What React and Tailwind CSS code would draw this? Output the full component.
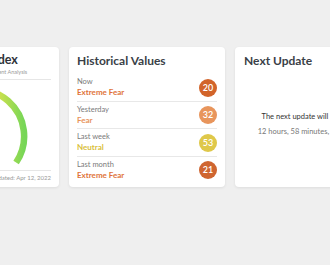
import React from 'react';

const rows = [
  { label: 'Now', status: 'Extreme Fear', value: 20, text: 'text-[#e0733a]', dot: 'bg-[#d2642a]' },
  { label: 'Yesterday', status: 'Fear', value: 32, text: 'text-[#e8935a]', dot: 'bg-[#e8955c]' },
  { label: 'Last week', status: 'Neutral', value: 53, text: 'text-[#d9c03c]', dot: 'bg-[#dfc84a]' },
  { label: 'Last month', status: 'Extreme Fear', value: 21, text: 'text-[#e0733a]', dot: 'bg-[#cf6530]' },
];

const Card = ({ children, className = '' }) => (
  <div className={`w-[156px] h-[140px] shrink-0 bg-white rounded-[4px] shadow-[0_1px_3px_rgba(0,0,0,0.08)] flex flex-col ${className}`}>
    {children}
  </div>
);

export default function App() {
  return (
    <div className="min-h-[265px] w-[330px] overflow-hidden bg-[#efefef] font-['Lato','Noto_Sans',sans-serif]">
      <div className="flex gap-[10px] pt-[47px] ml-[-97px]">
        <Card className="px-[8px]">
          <div className="pt-[5px] pb-[3px] border-b border-[#e6e6e6]">
            <div className="text-[12.5px] leading-[16px] font-bold text-[#2f333a]">Fear &amp; Greed Index</div>
            <div className="text-[5.5px] leading-[8px] text-[#9a9a9a]">Multifactorial Crypto Market Sentiment Analysis</div>
          </div>
          <svg width="140" height="96" viewBox="0 0 140 96" className="block">
            <defs>
              <linearGradient id="g" x1="0" y1="0" x2="1" y2="0">
                <stop offset="0" stopColor="#e0552b" />
                <stop offset="0.3" stopColor="#f0a640" />
                <stop offset="0.55" stopColor="#ebe04e" />
                <stop offset="0.75" stopColor="#c6e04e" />
                <stop offset="1" stopColor="#76d657" />
              </linearGradient>
            </defs>
            <path d="M 24.55 87.96 A 50 50 0 1 1 107.45 87.96" fill="none" stroke="url(#g)" strokeWidth="7" />
          </svg>
          <div className="mt-auto border-t border-[#e6e6e6] pt-[2px] pb-[4px] text-right text-[6px] leading-[10px] text-[#999]">
            Last updated: Apr 12, 2022
          </div>
        </Card>

        <Card className="px-[8px]">
          <div className="pt-[6px] pb-[5px] text-[12px] leading-[16px] font-bold text-[#3a3f47]">Historical Values</div>
          <div className="flex flex-col">
            {rows.map((r, i) => (
              <div key={r.label} className={`flex items-center justify-between pt-[3px] pb-[2.5px] ${i < 3 ? 'border-b border-[#e8e8e8]' : ''}`}>
                <div className="flex flex-col">
                  <span className="text-[7.5px] leading-[10px] text-[#7a7a7a]">{r.label}</span>
                  <span className={`text-[8px] leading-[11px] font-bold ${r.text}`}>{r.status}</span>
                </div>
                <div className={`w-[18px] h-[18px] rounded-full flex items-center justify-center text-white text-[9px] font-semibold ${r.dot}`}>
                  {r.value}
                </div>
              </div>
            ))}
          </div>
        </Card>

        <Card className="px-[9px]">
          <div className="pt-[6px] text-[12px] leading-[16px] font-bold text-[#3a3f47]">Next Update</div>
          <div className="flex flex-col items-center pt-[43px]">
            <div className="text-[7.5px] leading-[10px] text-[#333]">The next update will happen in:</div>
            <div className="mt-[5px] text-[7.5px] leading-[10px] text-[#777]">12 hours, 58 minutes, 20 seconds</div>
          </div>
        </Card>
      </div>
    </div>
  );
}
